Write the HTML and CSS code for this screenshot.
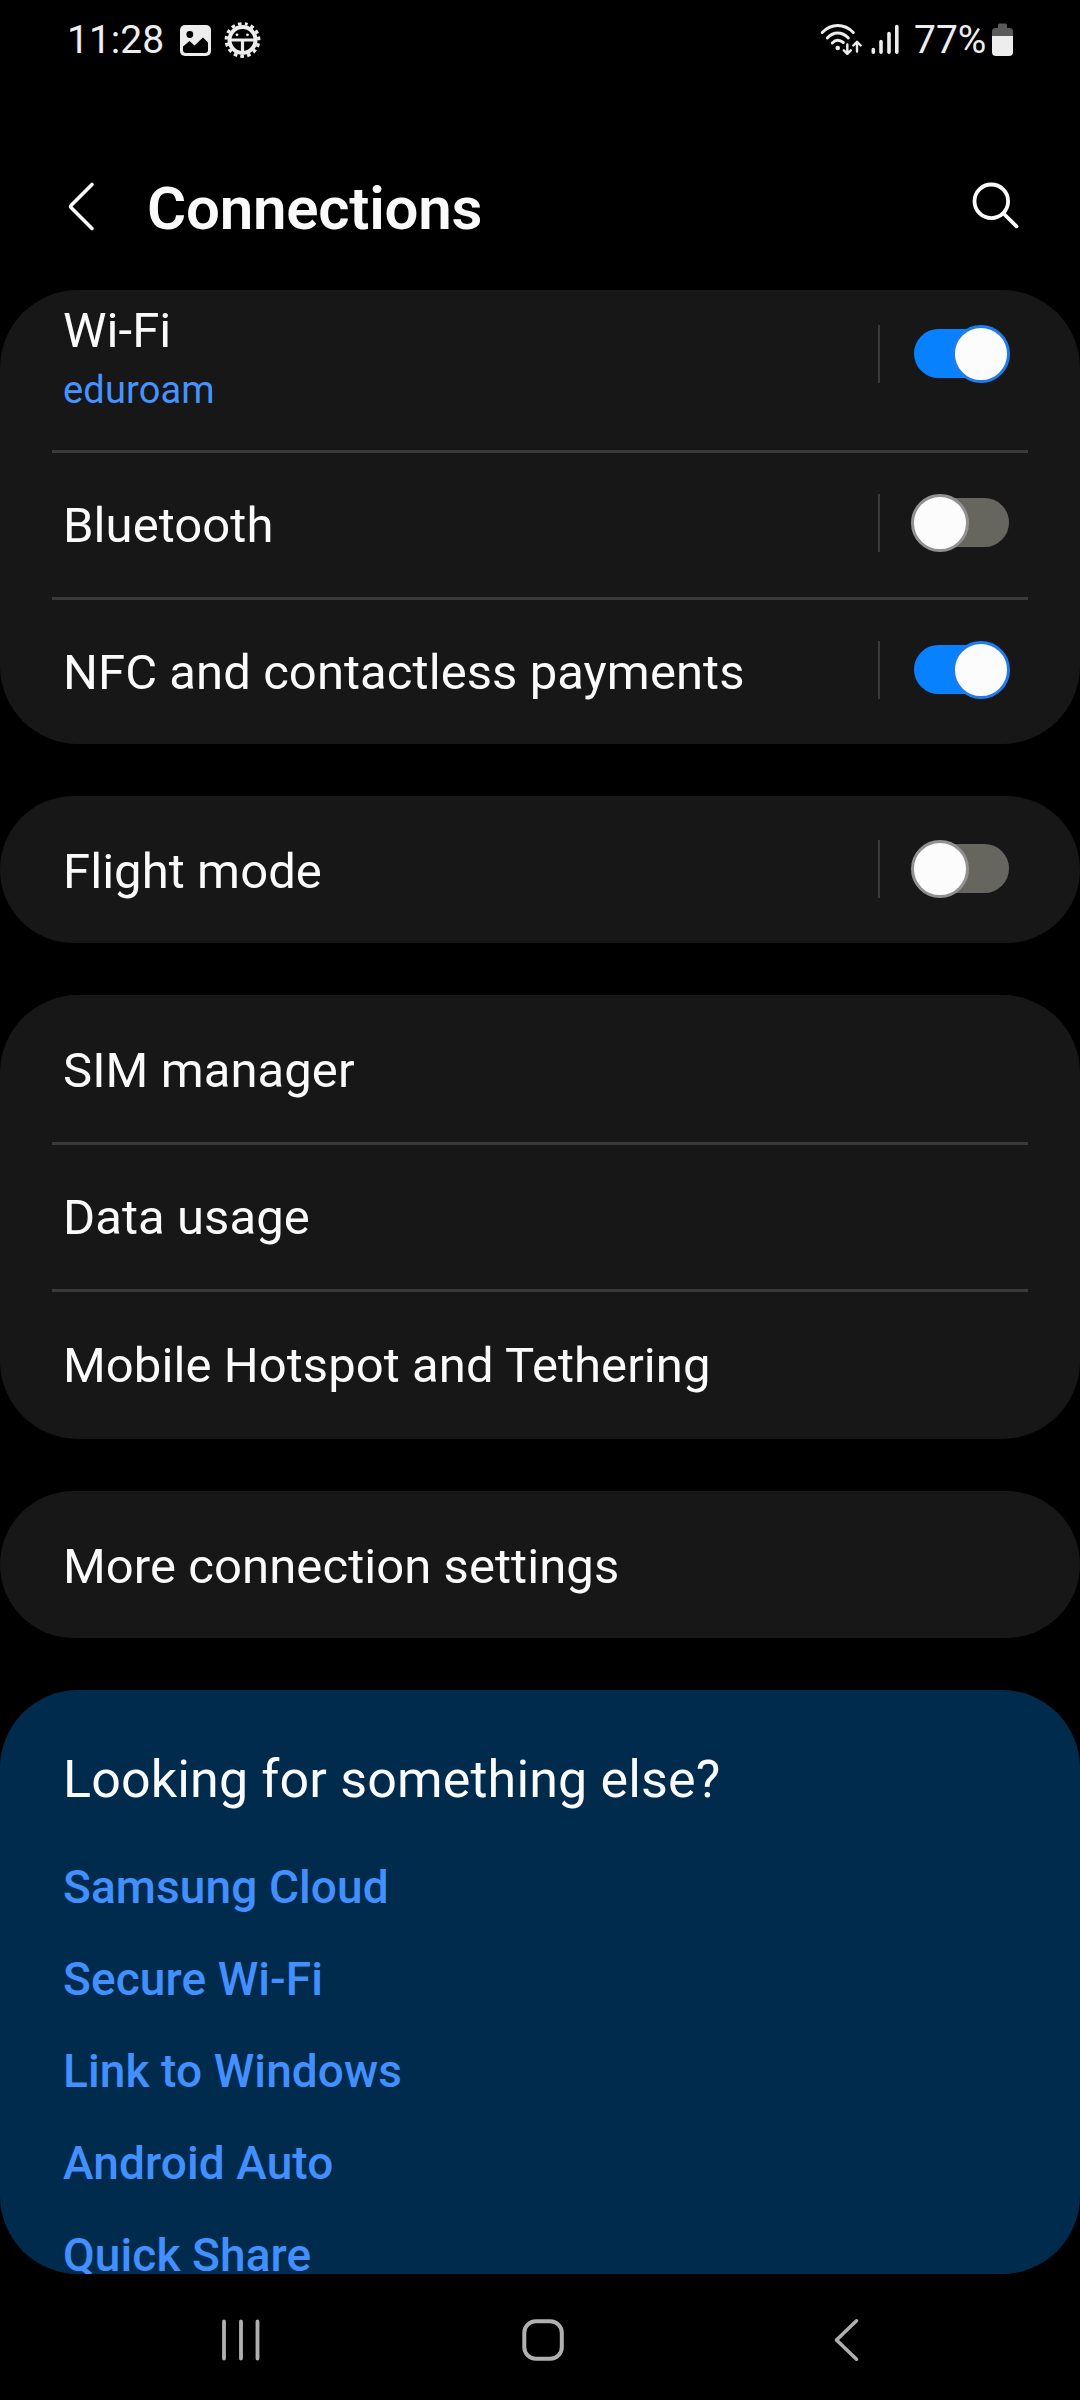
FILE: index.html
```html
<!DOCTYPE html>
<html lang="en">
  <head>
    <meta charset="UTF-8" />
    <meta name="viewport" content="width=device-width, initial-scale=1.0" />
    <title>Connections</title>
    <link rel="stylesheet" href="styles.css">
  </head>
  <body>
    <div class="status">
      <span class="time">11:28</span>
      <svg class="status-left" viewBox="176 20 90 40" width="90" height="40">
        <!-- picture -->
        <rect x="180" y="25" width="31" height="31" rx="5" fill="#ededed" />
        <circle cx="189.8" cy="34.5" r="3.4" fill="#000" />
        <path d="M183 46.500 L189.500 41 L194.500 45.500 L203 37.500 L208 42.500 V50 Q208 53 205 53 H186 Q183 53 183 50 Z" fill="#000" />
        <!-- gear -->
        <circle cx="242.500" cy="40" r="16.300" fill="none" stroke="#ededed" stroke-width="3.200" stroke-dasharray="3.600 3.228" stroke-dashoffset="1.800" transform="rotate(-78 242.500 40)" />
        <circle cx="242.500" cy="40" r="13" fill="none" stroke="#ededed" stroke-width="4" />
        <path d="M230 40 H255 M242.500 40 V53" stroke="#ededed" stroke-width="3.200" fill="none" />
        <circle cx="237" cy="34.800" r="1.400" fill="#ededed" />
        <circle cx="247.500" cy="34.800" r="1.400" fill="#ededed" />
      </svg>
      <svg class="status-right" viewBox="818 20 84 40" width="84" height="40">
        <!-- wifi -->
        <g fill="none" stroke="#ededed" stroke-width="3" stroke-linecap="round">
          <path d="M822.300 32.500 Q829 25.500 837.700 25.500 Q846.500 25.500 853.300 32.500" />
          <path d="M827.300 38 Q832 33 837.700 33 Q843.500 33 848.300 38" />
          <path d="M832.300 43 Q835 40.300 837.700 40.300 Q840.500 40.300 843.300 42.500" />
        </g>
        <circle cx="837.700" cy="48" r="2.300" fill="#ededed" />
        <path d="M847.300 44.500 V53.500 M843.800 50.300 L847.300 53.800 L850.800 50.300 M857 51.500 V42 M853.300 45.500 L857 41.800 L860.700 45.500" fill="none" stroke="#ededed" stroke-width="2.400" stroke-linecap="round" stroke-linejoin="round" />
        <!-- signal -->
        <path d="M873.300 49.500 V52.300 M881 41.500 V52.300 M889 33.500 V52.300 M896.800 26.500 V52.300" stroke="#ededed" stroke-width="3.600" stroke-linecap="round" />
      </svg>
      <span class="percent">77%</span>
      <svg viewBox="992 20 21 40" width="21" height="40">
        <path d="M992 36 V31.500 Q992 28 995.500 28 H998 V25 Q998 23.500 999.500 23.500 H1005.500 Q1007 23.500 1007 25 V28 H1009.500 Q1013 28 1013 31.500 V36 Z" fill="#5a5a5a" />
        <path d="M992 36 H1013 V52 Q1013 56 1009 56 H996 Q992 56 992 52 Z" fill="#ededed" />
      </svg>
    </div>

    <header>
      <svg viewBox="66 180 32 54" width="32" height="54">
        <path d="M92 184.500 L71.500 205 Q70 206.500 71.500 208 L92 228.500" fill="none" stroke="#fafafa" stroke-width="3.600" stroke-linecap="round" />
      </svg>
      <h1>Connections</h1>
      <svg class="search" viewBox="970 180 50 54" width="50" height="54">
        <circle cx="991.300" cy="201.300" r="16.800" fill="none" stroke="#fafafa" stroke-width="3.800" />
        <path d="M1003.500 213.500 L1016.500 226.300" stroke="#fafafa" stroke-width="3.800" stroke-linecap="round" />
      </svg>
    </header>

    <main>
      <section class="card">
        <div class="row wifi">
          <div class="label">
            <p>Wi-Fi</p>
            <p class="sub">eduroam</p>
          </div>
          <div class="toggle"><span class="switch on"><i></i></span></div>
        </div>
        <div class="row">
          <p>Bluetooth</p>
          <div class="toggle"><span class="switch"><i></i></span></div>
        </div>
        <div class="row">
          <p>NFC and contactless payments</p>
          <div class="toggle"><span class="switch on"><i></i></span></div>
        </div>
      </section>

      <section class="card">
        <div class="row">
          <p>Flight mode</p>
          <div class="toggle"><span class="switch"><i></i></span></div>
        </div>
      </section>

      <section class="card">
        <div class="row"><p>SIM manager</p></div>
        <div class="row"><p>Data usage</p></div>
        <div class="row tall"><p>Mobile Hotspot and Tethering</p></div>
      </section>

      <section class="card">
        <div class="row"><p>More connection settings</p></div>
      </section>

      <section class="card more">
        <h2>Looking for something else?</h2>
        <a href="#">Samsung Cloud</a>
        <a href="#">Secure Wi-Fi</a>
        <a href="#">Link to Windows</a>
        <a href="#">Android Auto</a>
        <a href="#">Quick Share</a>
      </section>
    </main>

    <nav>
      <svg viewBox="220 2315 42 50" width="42" height="50">
        <path d="M224 2321.500 V2358.500 M241 2321.500 V2358.500 M257.500 2321.500 V2358.500" stroke="#b0b0b0" stroke-width="3.800" stroke-linecap="round" />
      </svg>
      <svg class="home" viewBox="518 2315 50 50" width="50" height="50">
        <rect x="524.300" y="2321.200" width="37.500" height="37.500" rx="11.500" fill="none" stroke="#b0b0b0" stroke-width="4" />
      </svg>
      <svg viewBox="830 2315 32 50" width="32" height="50">
        <path d="M856.500 2320.800 L836.500 2340 L856.500 2359.200" fill="none" stroke="#b0b0b0" stroke-width="3.600" stroke-linecap="round" stroke-linejoin="round" />
      </svg>
    </nav>
  </body>
</html>
```

FILE: styles.css
```css
* {
  margin: 0;
  padding: 0;
  box-sizing: border-box;
}

body {
  width: 1080px;
  height: 2400px;
  overflow: hidden;
  background-color: #000;
  color: #fafafa;
  font-family: Roboto, "Liberation Sans", sans-serif;
}

svg {
  display: block;
  flex-shrink: 0;
}

/* status bar */
.status {
  display: flex;
  align-items: center;
  height: 80px;
  padding: 0 67px 0 67px;
  font-size: 39px;
  color: #ededed;
}

.time {
  width: 109px;
}

.status-right {
  margin-left: auto;
}

.percent {
  width: 78px;
  margin-left: 12px;
}

/* title bar */
header {
  display: flex;
  align-items: center;
  height: 210px;
  padding: 44px 60px 0 66px;
}

h1 {
  margin-left: 49px;
  padding-top: 4px;
  font-size: 60px;
  font-weight: 600;
  line-height: 70px;
  letter-spacing: -0.25px;
}

.search {
  margin-left: auto;
}

/* cards */
main {
  display: flex;
  flex-direction: column;
  gap: 52px;
  height: 1984px;
}

.card {
  flex-shrink: 0;
  border-radius: 78px;
  background-color: #171717;
  overflow: hidden;
}

.row {
  display: flex;
  align-items: center;
  justify-content: space-between;
  height: 147px;
  margin: 0 52px;
  padding: 0 18px 0 11px;
  border-top: 3px solid #3a3a3a;
  font-size: 49px;
  line-height: 60px;
  letter-spacing: 0.07px;
}

.row p {
  padding-top: 1px;
}

.row:first-child {
  border-top-color: transparent;
}

.tall {
  height: 150px;
}

.wifi {
  align-items: flex-start;
  height: 160px;
  padding-top: 7px;
}

.row .sub {
  margin-top: 3px;
  font-size: 38px;
  line-height: 50px;
  letter-spacing: 0.15px;
  color: #4693ff;
}

.toggle {
  display: flex;
  align-items: center;
  justify-content: flex-end;
  width: 132px;
  height: 58px;
  margin-bottom: 4px;
  border-left: 2px solid #3a3a3a;
}

.wifi .toggle {
  margin-top: 25px;
}

.switch {
  display: flex;
  align-items: center;
  width: 95px;
  height: 49px;
  margin: 0 1px 1px 0;
  border-radius: 25px;
  background-color: #66665f;
}

.switch i {
  flex-shrink: 0;
  width: 58px;
  height: 58px;
  margin: 0 0 -1px -3px;
  border: 3px solid #919191;
  border-radius: 50%;
  background-color: #fcfcfc;
}

.switch.on {
  background-color: #0781fe;
}

.switch.on i {
  margin-left: 38px;
  border-color: #1e7dee;
}

/* suggestions, cut off by the navigation bar */
.more {
  display: flex;
  flex-direction: column;
  height: 584px;
  padding: 60px 63px 0;
  background-color: #002b4d;
}

h2 {
  margin-bottom: 31px;
  font-size: 52px;
  font-weight: 400;
  line-height: 60px;
  letter-spacing: 0.15px;
}

.more a {
  flex-shrink: 0;
  font-size: 46px;
  font-weight: 500;
  line-height: 92px;
  letter-spacing: 0.1px;
  color: #428fff;
  text-decoration: none;
}

nav {
  display: flex;
  align-items: center;
  justify-content: space-between;
  height: 126px;
  padding: 6px 218px 0 220px;
}

.home {
  margin-right: 6px;
}
```
